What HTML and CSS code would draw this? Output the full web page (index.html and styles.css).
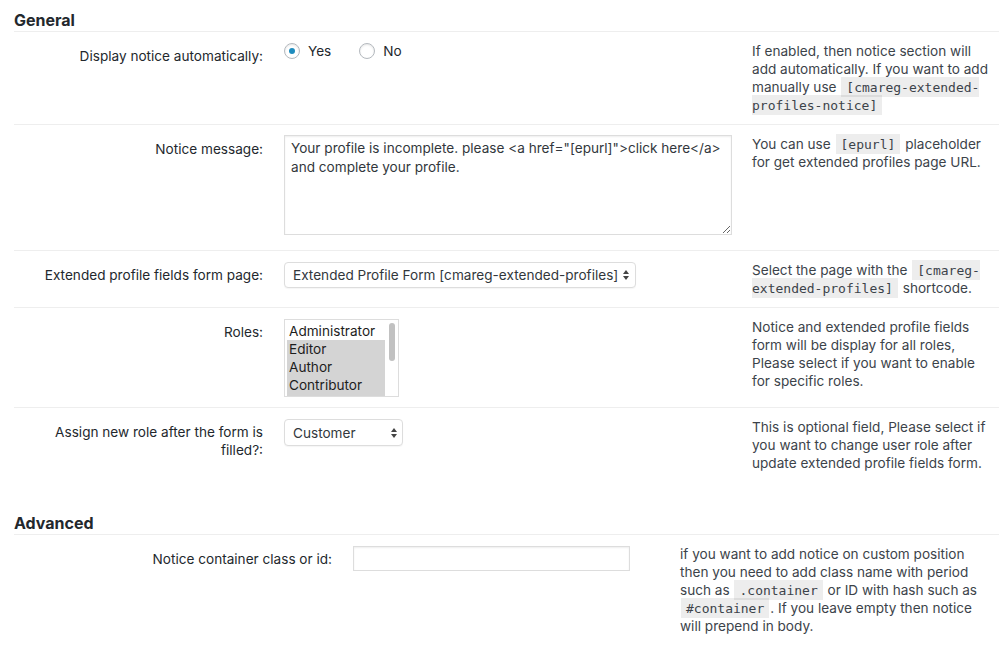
FILE: index.html
```html
<!DOCTYPE html>
<html lang="en">
<head>
<meta charset="utf-8">
<title>Extended Profiles Settings</title>
<link rel="stylesheet" href="styles.css">
</head>
<body>
<div class="settings">
  <h2 class="section-title">General</h2>
  <div class="form form-general">
    <div class="row">
      <div class="label">Display notice automatically:</div>
      <div class="field">
        <div class="radios">
          <span class="radio"><span class="radio-circle checked"></span>Yes</span>
          <span class="radio"><span class="radio-circle"></span>No</span>
        </div>
      </div>
      <div class="desc">If enabled, then notice section will<br>add automatically. If you want to add<br>manually use <code>[cmareg-extended-<br>profiles-notice]</code></div>
    </div>
    <div class="row">
      <div class="label">Notice message:</div>
      <div class="field field-textarea">
        <textarea class="textarea" wrap="off" readonly>Your profile is incomplete. please &lt;a href="[epurl]"&gt;click here&lt;/a&gt;
and complete your profile.</textarea>
      </div>
      <div class="desc">You can use <code>[epurl]</code> placeholder<br>for get extended profiles page URL.</div>
    </div>
    <div class="row">
      <div class="label">Extended profile fields form page:</div>
      <div class="field field-select">
        <div class="select select-page">
          <span class="select-text">Extended Profile Form [cmareg-extended-profiles]</span>
          <svg class="select-arrows" width="6" height="10" viewBox="0 0 6 10"><path d="M3 0L6 4H0z M0 6H6L3 10z"/></svg>
        </div>
      </div>
      <div class="desc">Select the page with the <code>[cmareg-<br>extended-profiles]</code> shortcode.</div>
    </div>
    <div class="row">
      <div class="label">Roles:</div>
      <div class="field field-select">
        <div class="listbox">
          <div class="options">
            <div class="option">Administrator</div>
            <div class="option selected">Editor</div>
            <div class="option selected">Author</div>
            <div class="option selected">Contributor</div>
            <div class="option selected option-partial"></div>
          </div>
          <div class="scrollbar"><div class="thumb"></div></div>
        </div>
      </div>
      <div class="desc">Notice and extended profile fields<br>form will be display for all roles,<br>Please select if you want to enable<br>for specific roles.</div>
    </div>
    <div class="row">
      <div class="label">Assign new role after the form is<br>filled?:</div>
      <div class="field field-select">
        <div class="select select-role">
          <span class="select-text">Customer</span>
          <svg class="select-arrows" width="6" height="10" viewBox="0 0 6 10"><path d="M3 0L6 4H0z M0 6H6L3 10z"/></svg>
        </div>
      </div>
      <div class="desc">This is optional field, Please select if<br>you want to change user role after<br>update extended profile fields form.</div>
    </div>
  </div>

  <h2 class="section-title section-advanced">Advanced</h2>
  <div class="form form-advanced">
    <div class="row">
      <div class="label">Notice container class or id:</div>
      <div class="field field-select">
        <input class="text-input" type="text" value="">
      </div>
      <div class="desc">if you want to add notice on custom position<br>then you need to add class name with period<br>such as <code>.container</code> or ID with hash such as<br><code>#container</code>. If you leave empty then notice<br>will prepend in body.</div>
    </div>
  </div>
</div>
</body>
</html>
```

FILE: styles.css
```css
html, body {
  margin: 0;
  padding: 0;
  background: #fff;
}

body {
  font-family: Inter, "Noto Sans", sans-serif;
  font-size: 13.6px;
  color: #3c434a;
}

.settings {
  padding: 0 8px 0 14px;
}

.section-title {
  margin: 9px 0 0;
  font-size: 16px;
  line-height: 22px;
  font-weight: 700;
  color: #23282d;
  border-bottom: 1px solid #eeeeee;
}

.section-advanced {
  margin-top: 30px;
}

.row {
  display: grid;
  border-bottom: 1px solid #eeeeee;
}

.row:last-child {
  border-bottom: none;
}

.form-general .row {
  grid-template-columns: 259px 469px 1fr;
}

.form-advanced .row {
  grid-template-columns: 328px 328px 1fr;
}

.label {
  padding: 15px 10px 0 0;
  text-align: right;
  line-height: 18px;
  color: #23282d;
}

.field {
  padding: 10px 0 10px 11px;
}

.field-textarea {
  padding-bottom: 15px;
}

.field-select {
  padding-top: 11px;
}

.desc {
  padding: 10px 0 10px 10px;
  line-height: 18px;
  white-space: nowrap;
  color: #3c434a;
}

code {
  font-family: "DejaVu Sans Mono", monospace;
  font-size: 13px;
  line-height: 1;
  padding: 3px 5px 2px;
  margin: 0 1px;
  background: rgba(0, 0, 0, 0.07);
  color: #3c434a;
}

/* radios */
.radios {
  display: flex;
  align-items: center;
  height: 18px;
}

.radio {
  display: inline-flex;
  align-items: center;
  color: #23282d;
}

.radio + .radio {
  margin-left: 28px;
}

.radio-circle {
  box-sizing: border-box;
  width: 16px;
  height: 16px;
  margin-right: 8px;
  border: 1px solid #b4b9be;
  border-radius: 50%;
  background: #fff;
  box-shadow: inset 0 1px 2px rgba(0, 0, 0, 0.1);
  display: inline-flex;
  align-items: center;
  justify-content: center;
}

.radio-circle.checked::after {
  content: "";
  width: 6px;
  height: 6px;
  border-radius: 50%;
  background: #1e8cbe;
}

/* textarea */
.textarea {
  display: block;
  box-sizing: border-box;
  width: 448px;
  height: 100px;
  margin: 0;
  padding: 3px 6px;
  border: 1px solid #dddddd;
  box-shadow: inset 0 1px 2px rgba(0, 0, 0, 0.07);
  font-family: inherit;
  font-size: 13.6px;
  line-height: 19px;
  color: #32373c;
  overflow: hidden;
  resize: vertical;
  outline: none;
}

/* select */
.select {
  box-sizing: border-box;
  display: flex;
  align-items: center;
  justify-content: space-between;
  height: 26px;
  padding: 0 6px 0 8px;
  border: 1px solid #dddddd;
  border-radius: 4px;
  background: #fff;
  box-shadow: 0 1px 1px rgba(0, 0, 0, 0.04);
  color: #32373c;
  white-space: nowrap;
}

.select-page {
  width: 352px;
}

.select-role {
  width: 119px;
  height: 27px;
  padding-right: 5px;
}

.select-arrows {
  fill: #444;
  flex: none;
}

/* listbox */
.listbox {
  box-sizing: border-box;
  display: flex;
  width: 115px;
  height: 78px;
  padding: 2px 0 0 2px;
  border: 1px solid #dddddd;
  background: #fff;
  overflow: hidden;
}

.options {
  width: 98px;
  overflow: hidden;
}

.option {
  height: 18px;
  line-height: 18px;
  padding-left: 2px;
  color: #1d1d1d;
  white-space: nowrap;
}

.option.selected {
  background: #d4d4d4;
}

.scrollbar {
  flex: 1;
  padding: 1px 0 0 4px;
}

.thumb {
  width: 6px;
  height: 38px;
  border-radius: 3px;
  background: #c1c1c1;
}

/* text input */
.text-input {
  display: block;
  box-sizing: border-box;
  width: 277px;
  height: 25px;
  margin: 0;
  padding: 2px 6px;
  border: 1px solid #dddddd;
  box-shadow: inset 0 1px 2px rgba(0, 0, 0, 0.07);
  font-family: inherit;
  font-size: 14px;
  outline: none;
}
```
